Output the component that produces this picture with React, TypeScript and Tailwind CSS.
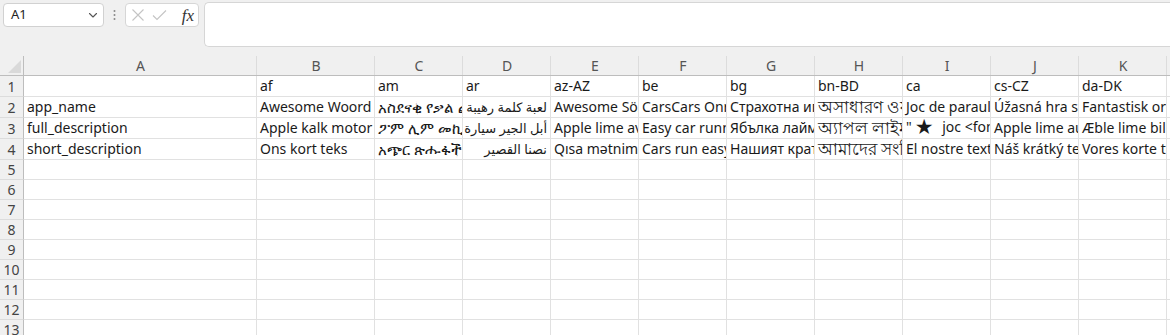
import React from "react";

const FONT = { fontFamily: '"Noto Sans", "Liberation Sans", "DejaVu Sans", "Noto Sans CJK SC", sans-serif' };

type Cell = { t?: React.ReactNode; rtl?: boolean; big?: boolean; eth?: boolean };

const cols = ["A", "B", "C", "D", "E", "F", "G", "H", "I", "J", "K", ""];

const rows: Cell[][] = [
  [
    {},
    { t: "af" },
    { t: "am" },
    { t: "ar" },
    { t: "az-AZ" },
    { t: "be" },
    { t: "bg" },
    { t: "bn-BD" },
    { t: "ca" },
    { t: "cs-CZ" },
    { t: "da-DK" },
    {},
  ],
  [
    { t: "app_name" },
    { t: "Awesome Woord Speletjie" },
    { t: "አስደናቂ የቃል ጨዋታ", eth: true },
    { t: "لعبة كلمة رهيبة", rtl: true },
    { t: "Awesome Söz Oyunu" },
    { t: "CarsCars Onr гульня" },
    { t: "Страхотна игра на думи" },
    { t: "অসাধারণ ওয়ার্ড গেম", big: true },
    { t: "Joc de paraules impressionant" },
    { t: "Úžasná hra se slovy" },
    { t: "Fantastisk ordspil" },
    {},
  ],
  [
    { t: "full_description" },
    { t: "Apple kalk motor loop maklik" },
    { t: "ፖም ሊም መኪና በቀላሉ", eth: true },
    { t: "أبل الجير سيارة", rtl: true },
    { t: "Apple lime avtomobil" },
    { t: "Easy car running" },
    { t: "Ябълка лайм кола" },
    { t: "অ্যাপল লাইম গাড়ি", big: true },
    {
      t: (
        <>
          "<span className="inline-block text-[21px] leading-none ml-[3px] mr-[5px] align-[-2px]">★</span> joc &lt;font color="red"&gt;
        </>
      ),
    },
    { t: "Apple lime auto běží" },
    { t: "Æble lime bil kører" },
    {},
  ],
  [
    { t: "short_description" },
    { t: "Ons kort teks" },
    { t: "አጭር ጽሑፋችን", eth: true },
    { t: "نصنا القصير", rtl: true },
    { t: "Qısa mətnimiz" },
    { t: "Cars run easy" },
    { t: "Нашият кратък текст" },
    { t: "আমাদের সংক্ষিপ্ত লেখা", big: true },
    { t: "El nostre text curt" },
    { t: "Náš krátký text" },
    { t: "Vores korte tekst" },
    {},
  ],
];

function ChevronDown() {
  return (
    <svg width="12" height="12" viewBox="0 0 12 12" fill="none">
      <path d="M2.5 4.5 L6 8 L9.5 4.5" stroke="#555" strokeWidth="1.1" strokeLinecap="round" strokeLinejoin="round" />
    </svg>
  );
}

export default function App() {
  const emptyRows = [5, 6, 7, 8, 9, 10, 11, 12, 13];
  return (
    <div className="w-[1170px] h-[335px] overflow-hidden bg-[#f0f0f0] text-[#222]" style={FONT}>
      {/* toolbar */}
      <div className="h-[56px] flex items-start">
        <div className="mt-[3px] ml-[3px] w-[101px] h-[24px] bg-white border border-[#d1d1d1] rounded-[4px] flex items-center justify-between pl-[7px] pr-[4px]">
          <span className="text-[13px] text-[#222]">A1</span>
          <ChevronDown />
        </div>
        <div className="w-[21px] h-[30px] flex items-center justify-center">
          <svg width="3" height="12" viewBox="0 0 3 12">
            <circle cx="1.5" cy="2" r="1" fill="#888" />
            <circle cx="1.5" cy="6" r="1" fill="#888" />
            <circle cx="1.5" cy="10" r="1" fill="#888" />
          </svg>
        </div>
        <div className="mt-[3px] w-[74px] h-[24px] bg-white border border-[#d6d6d6] rounded-[4px] flex items-center pl-[5px] pr-[4px] gap-[7px]">
          <svg width="14" height="14" viewBox="0 0 14 14">
            <path d="M1.5 1.5 L12.5 12.5 M12.5 1.5 L1.5 12.5" stroke="#c4c4c4" strokeWidth="1.1" />
          </svg>
          <svg width="15" height="14" viewBox="0 0 15 14">
            <path d="M1 7.5 L5 11.5 L14 2.5" stroke="#c4c4c4" strokeWidth="1.1" fill="none" />
          </svg>
          <span
            className="ml-auto text-[17px] italic text-[#333] leading-none"
            style={{ fontFamily: '"Liberation Serif", "DejaVu Serif", serif' }}
          >
            fx
          </span>
        </div>
        <div className="ml-[5px] mt-[2px] flex-1 h-[45px] bg-white border border-[#d6d6d6] rounded-l-[5px] border-r-0" />
      </div>

      {/* grid */}
      <div className="grid grid-cols-[24px_233px_118px_repeat(9,88px)_1fr] bg-white">
        {/* header row */}
        <div className="h-[20px] bg-[#f0f0f0] border-r border-b border-[#bdbdbd] relative">
          <svg className="absolute right-[2px] bottom-[2px]" width="13" height="13" viewBox="0 0 13 13">
            <path d="M13 0 L13 13 L0 13 Z" fill="#d9d9d9" />
          </svg>
        </div>
        {cols.map((c, i) => (
          <div
            key={c + i}
            className="h-[20px] bg-[#f0f0f0] border-b border-[#bdbdbd] flex items-center justify-center text-[14px] text-[#555] relative"
          >
            {c}
            <div className="absolute right-0 top-0 bottom-0 w-px bg-[#dcdcdc]" />
          </div>
        ))}

        {rows.map((r, ri) => (
          <React.Fragment key={ri}>
            <div className="h-[21px] bg-[#f0f0f0] border-r border-b border-r-[#bdbdbd] border-b-[#dcdcdc] flex items-center justify-center text-[14px] text-[#444]">
              {ri + 1}
            </div>
            {r.map((cell, ci) => (
              <div
                key={ci}
                className={
                  "h-[21px] border-r border-b border-[#e1e1e1] overflow-hidden whitespace-nowrap flex text-[14px] text-[#1a1a1a] " +
                  (cell.big ? "items-center leading-[20px] " : "items-end pb-[1px] leading-[18px] ") +
                  (cell.rtl ? "justify-end pr-[3px]" : "pl-[3px]")
                }
              >
                {cell.t !== undefined && (
                  <span
                    dir={cell.rtl ? "rtl" : undefined}
                    className={
                      (cell.big ? "text-[17px] font-medium " : "") +
                      (cell.eth ? "text-[15px] " : "") +
                      (cell.rtl ? "text-[13px] " : "") +
                      "shrink-0"
                    }
                  >
                    {cell.t}
                  </span>
                )}
              </div>
            ))}
          </React.Fragment>
        ))}

        {emptyRows.map((n) => (
          <React.Fragment key={n}>
            <div className="h-[20px] bg-[#f0f0f0] border-r border-b border-r-[#bdbdbd] border-b-[#dcdcdc] flex items-center justify-center text-[14px] text-[#444]">
              {n}
            </div>
            {cols.map((c, ci) => (
              <div key={ci} className="h-[20px] border-r border-b border-[#e1e1e1]" />
            ))}
          </React.Fragment>
        ))}
      </div>
    </div>
  );
}
